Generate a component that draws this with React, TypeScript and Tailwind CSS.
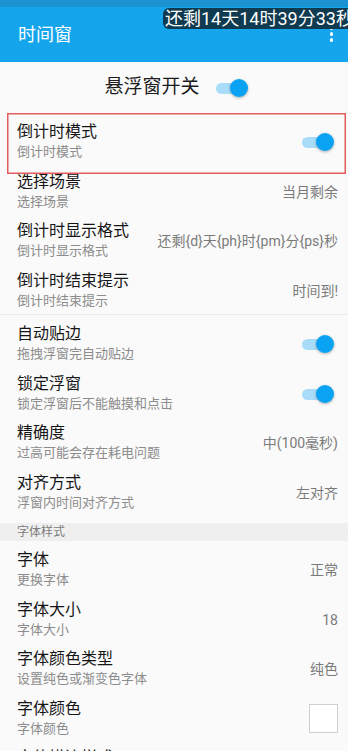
import React from "react";

const font = { fontFamily: "Roboto, 'Noto Sans CJK SC', 'Noto Sans', sans-serif" };

function Toggle() {
  return (
    <div className="relative w-[32px] h-[18px] shrink-0">
      <div className="absolute left-0 top-[4px] w-[28px] h-[11px] rounded-full bg-[#a9dcf8]" />
      <div className="absolute right-0 top-0 w-[18px] h-[18px] rounded-full bg-[#0aa3f3] shadow-[0_1px_3px_rgba(0,0,0,0.3)]" />
    </div>
  );
}

interface RowProps {
  title: string;
  sub?: string;
  value?: string;
  toggle?: boolean;
  swatch?: boolean;
}

function Row({ title, sub, value, toggle, swatch }: RowProps) {
  return (
    <div className="h-[49.5px] pl-[17px] pr-[10px] pt-[9px]">
      <div className="flex items-center justify-between">
        <div className="flex flex-col">
          <span className="text-[16px] leading-[20px] text-[#161616]">{title}</span>
          {sub && <span className="text-[13px] leading-[20px] text-[#8c8c8c]">{sub}</span>}
        </div>
        {value && <span className="text-[14px] leading-[20px] text-[#7a7a7a]">{value}</span>}
        {toggle && (
          <div className="mr-[4px]">
            <Toggle />
          </div>
        )}
        {swatch && <div className="w-[29px] h-[29px] bg-white border border-[#cfcfcf]" />}
      </div>
    </div>
  );
}

export default function App() {
  return (
    <div className="relative w-[348px] h-[751px] overflow-hidden bg-[#fafafa]" style={font}>
      {/* status bar + toolbar */}
      <div className="h-[7px] bg-[#1b93d3]" />
      <div className="h-[55px] bg-[#14a5ec] flex items-center justify-between pl-[18px] pr-[15px]">
        <span className="text-[18px] text-white">时间窗</span>
        <div className="flex flex-col gap-[2.5px] -mt-[1px]">
          <div className="w-[3.5px] h-[3.5px] rounded-full bg-white" />
          <div className="w-[3.5px] h-[3.5px] rounded-full bg-white" />
          <div className="w-[3.5px] h-[3.5px] rounded-full bg-white" />
        </div>
      </div>

      {/* floating countdown window */}
      <div className="absolute top-[8px] left-[163px] h-[21px] pl-[2px] pr-[10px] rounded-[6px] bg-[#0f3a50] flex items-center whitespace-nowrap">
        <span className="text-[18px] leading-[21px] text-white">还剩14天14时39分33秒</span>
      </div>

      {/* master switch */}
      <div className="h-[51px] flex items-center justify-center gap-[16px] pl-[4px]">
        <span className="text-[19px] text-[#1c1c1c]">悬浮窗开关</span>
        <Toggle />
      </div>

      <Row title="倒计时模式" sub="倒计时模式" toggle />
      <Row title="选择场景" sub="选择场景" value="当月剩余" />
      <Row title="倒计时显示格式" sub="倒计时显示格式" value="还剩{d}天{ph}时{pm}分{ps}秒" />
      <Row title="倒计时结束提示" sub="倒计时结束提示" value="时间到!" />

      <div className="h-[4px] flex flex-col justify-end">
        <div className="h-[1px] bg-[#ebebeb]" />
      </div>

      <Row title="自动贴边" sub="拖拽浮窗完自动贴边" toggle />
      <Row title="锁定浮窗" sub="锁定浮窗后不能触摸和点击" toggle />
      <Row title="精确度" sub="过高可能会存在耗电问题" value="中(100毫秒)" />
      <Row title="对齐方式" sub="浮窗内时间对齐方式" value="左对齐" />

      <div className="mt-[10px] h-[18px] bg-[#efefef] pl-[17px] flex items-center">
        <span className="text-[12px] text-[#7c7c7c]">字体样式</span>
      </div>

      <Row title="字体" sub="更换字体" value="正常" />
      <Row title="字体大小" sub="字体大小" value="18" />
      <Row title="字体颜色类型" sub="设置纯色或渐变色字体" value="纯色" />
      <Row title="字体颜色" sub="字体颜色" swatch />
      <Row title="字体描边样式" sub="字体描边样式" value="无" />

      {/* highlight frame, drawn as an svg rectangle over the first row */}
      <svg className="absolute left-[7px] top-[113px] pointer-events-none" width="339" height="61" viewBox="0 0 339 61">
        <rect x="0.75" y="0.75" width="337.5" height="59.5" fill="none" stroke="#e25c5c" strokeWidth="1.5" />
      </svg>
    </div>
  );
}
